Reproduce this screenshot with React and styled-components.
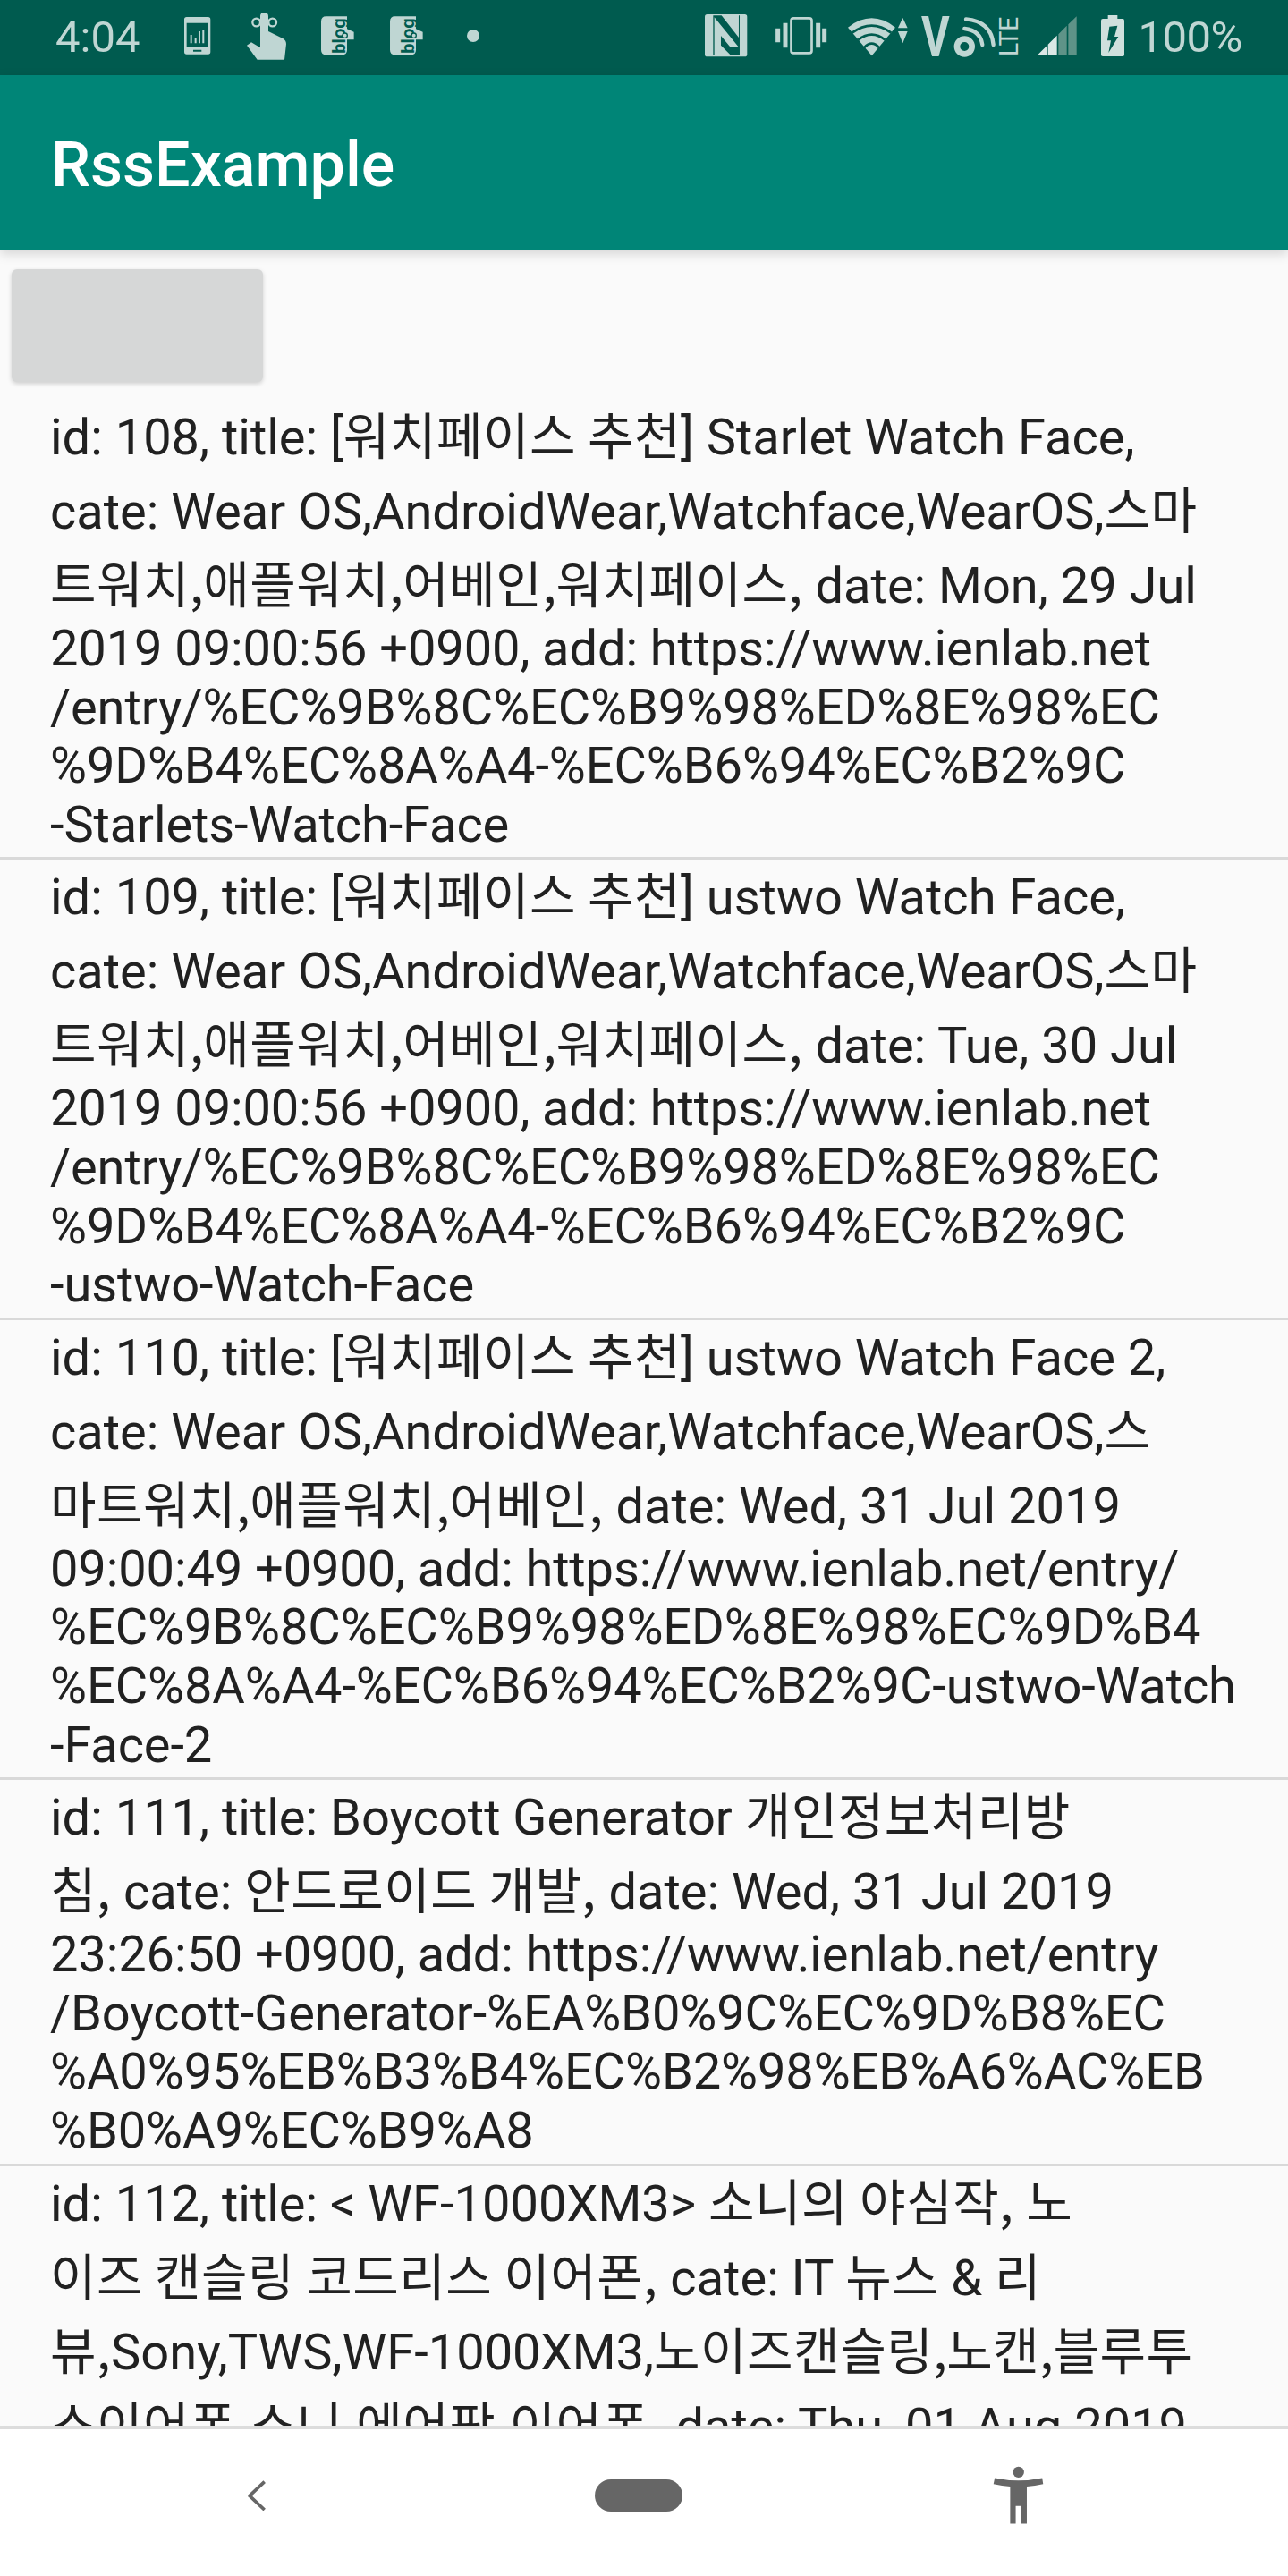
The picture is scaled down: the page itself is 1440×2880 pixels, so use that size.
import React from "react";
import styled, { createGlobalStyle } from "styled-components";

const Global = createGlobalStyle`
  html, body { margin: 0; padding: 0; background: #fafafa; }
  body { font-family: Roboto, "Noto Sans CJK KR", sans-serif; }
`;

const Screen = styled.div`
  width: 1440px;
  height: 2880px;
  display: flex;
  flex-direction: column;
  overflow: hidden;
  background: #fafafa;
`;

const StatusBar = styled.div`
  height: 84px;
  flex: none;
  display: flex;
  align-items: center;
  justify-content: space-between;
  padding: 0 51px 4px 62px;
  box-sizing: border-box;
  background: #005b4f;
  color: #bfd6d3;
  font-size: 49px;
`;

const StatusGroup = styled.div`
  display: flex;
  align-items: center;
`;

const StatusText = styled.span`
  margin-top: 3px;
  margin-left: ${(p) => p.$ml || 0}px;
  letter-spacing: ${(p) => p.$ls || 0}px;
`;

const Ic = styled.svg`
  display: block;
  flex: none;
  overflow: visible;
  fill: #bfd6d3;
  margin-left: ${(p) => p.$ml || 0}px;
`;

const AppBar = styled.header`
  height: 196px;
  flex: none;
  display: flex;
  align-items: center;
  padding: 4px 0 0 57px;
  box-sizing: border-box;
  background: #008577;
  color: #fff;
  font-size: 70px;
  font-weight: 500;
  box-shadow: 0 4px 12px rgba(0, 0, 0, 0.15);
  position: relative;
  z-index: 1;
`;

const Content = styled.main`
  flex: 1;
  min-height: 0;
  overflow: hidden;
`;

const LoadButton = styled.div`
  width: 281px;
  height: 126px;
  margin: 21px 0 20px 13px;
  border-radius: 6px;
  background: #d6d7d7;
  box-shadow: 0 2px 5px rgba(0, 0, 0, 0.18);
`;

const Row = styled.article`
  padding-left: 56px;
  border-bottom: ${(p) => (p.$last ? "none" : "3px solid #d9d9d9")};
  color: #212121;
  font-size: 56px;
`;

const Line = styled.div`
  white-space: nowrap;
  height: ${(p) => (p.$tall ? 83 : 65.6)}px;
  line-height: ${(p) => (p.$tall ? 84 : 59)}px;
  letter-spacing: ${(p) => (p.$tall ? 0 : -0.1)}px;
`;

const Hangul = styled.span`
  font-family: "Noto Sans CJK KR", sans-serif;
  line-height: 0;
  letter-spacing: 0.5px;
`;

const TightComma = styled.span`
  letter-spacing: -0.5px;
`;

const NavBar = styled.nav`
  height: 168px;
  flex: none;
  display: flex;
  align-items: center;
  padding: 0 0 16px 277px;
  border-top: 4px solid #dcdcdc;
  box-sizing: border-box;
  background: #fff;
`;

const NavIcon = styled.svg`
  display: block;
  flex: none;
  fill: #666;
  margin-left: ${(p) => p.$ml || 0}px;
`;

const rows = [
  [
    ["id: 108, title: [워치페이스 추천] Starlet Watch Face,", 1],
    ["cate: Wear OS,AndroidWear,Watchface,WearOS,스마", 1],
    ["트워치,애플워치,어베인,워치페이스, date: Mon, 29 Jul", 1],
    ["2019 09:00:56 +0900, add: https://www.ienlab.net", 0],
    ["/entry/%EC%9B%8C%EC%B9%98%ED%8E%98%EC", 0],
    ["%9D%B4%EC%8A%A4-%EC%B6%94%EC%B2%9C", 0],
    ["-Starlets-Watch-Face", 0],
  ],
  [
    ["id: 109, title: [워치페이스 추천] ustwo Watch Face,", 1],
    ["cate: Wear OS,AndroidWear,Watchface,WearOS,스마", 1],
    ["트워치,애플워치,어베인,워치페이스, date: Tue, 30 Jul", 1],
    ["2019 09:00:56 +0900, add: https://www.ienlab.net", 0],
    ["/entry/%EC%9B%8C%EC%B9%98%ED%8E%98%EC", 0],
    ["%9D%B4%EC%8A%A4-%EC%B6%94%EC%B2%9C", 0],
    ["-ustwo-Watch-Face", 0],
  ],
  [
    ["id: 110, title: [워치페이스 추천] ustwo Watch Face 2,", 1],
    ["cate: Wear OS,AndroidWear,Watchface,WearOS,스", 1],
    ["마트워치,애플워치,어베인, date: Wed, 31 Jul 2019", 1],
    ["09:00:49 +0900, add: https://www.ienlab.net/entry/", 0],
    ["%EC%9B%8C%EC%B9%98%ED%8E%98%EC%9D%B4", 0],
    ["%EC%8A%A4-%EC%B6%94%EC%B2%9C-ustwo-Watch", 0],
    ["-Face-2", 0],
  ],
  [
    ["id: 111, title: Boycott Generator 개인정보처리방", 1],
    ["침, cate: 안드로이드 개발, date: Wed, 31 Jul 2019", 1],
    ["23:26:50 +0900, add: https://www.ienlab.net/entry", 0],
    ["/Boycott-Generator-%EA%B0%9C%EC%9D%B8%EC", 0],
    ["%A0%95%EB%B3%B4%EC%B2%98%EB%A6%AC%EB", 0],
    ["%B0%A9%EC%B9%A8", 0],
  ],
  [
    ["id: 112, title: < WF-1000XM3> 소니의 야심작, 노", 1],
    ["이즈 캔슬링 코드리스 이어폰, cate: IT 뉴스 & 리", 1],
    ["뷰,Sony,TWS,WF-1000XM3,노이즈캔슬링,노캔,블루투", 1],
    ["스이어폰,소니,에어팟,이어폰, date: Thu, 01 Aug 2019", 1],
  ],
];

const HANGUL_RUN = /([가-힣]+(?:[, ][가-힣]+)*,?)/g;
const INNER_COMMA = /(,(?=\S))/g;

function LineText({ text }) {
  const pieces = text.split(HANGUL_RUN);
  return pieces.map((part, i) => {
    if (i % 2 === 0) return part;
    // a comma that closes a run but has no space after it is also set tight
    const glued = part.endsWith(",") && pieces[i + 1] && !pieces[i + 1].startsWith(" ");
    const inner = part.split(INNER_COMMA);
    return (
      <Hangul key={i}>
        {inner.map((p, k) =>
          k % 2 || (glued && p === "," ) ? <TightComma key={k}>{p}</TightComma> : p
        )}
      </Hangul>
    );
  });
}

const DARK = "#005b4f";

function BlogIcon({ ml }) {
  return (
    <Ic $ml={ml} width="36.67" height="43.3" viewBox="478 25 110 130">
      <path d="M495 26H565V68L588 78V104H565V138Q565 155 548 155H495Q478 155 478 138V43Q478 26 495 26Z" />
      <text
        transform="translate(558 150) rotate(-90)"
        fill={DARK}
        fontFamily="Roboto, sans-serif"
        fontWeight="700"
        fontSize="60"
      >
        blog
      </text>
      <circle cx="558" cy="90" r="8" fill="#bfd6d3" stroke={DARK} strokeWidth="4" />
    </Ic>
  );
}

export default function App() {
  return (
    <Screen>
      <Global />
      <StatusBar>
        <StatusGroup>
          <StatusText>4:04</StatusText>
          <Ic $ml={50} width="29.3" height="41.7" viewBox="20 28 88 125">
            <path
              fillRule="evenodd"
              d="M28 28H100Q108 28 108 36V145Q108 153 100 153H28Q20 153 20 145V36Q20 28 28 28ZM28 48V128H100V48ZM50 138V144H78V138Z"
            />
            <path d="M40 88H46V116H40ZM55 98H61V116H55ZM68 76H74V116H68ZM81 70H87V116H81Z" />
          </Ic>
          <Ic $ml={40} width="44" height="52.7" viewBox="230 12 132 158">
            <path d="M275 24Q275 12 288 12Q302 12 302 24V75L352 100Q362 106 362 118L356 170H265L230 122L245 112L275 130Z" />
            <circle cx="262" cy="45" r="13" fill="none" stroke="#bfd6d3" strokeWidth="7" />
            <circle cx="316" cy="45" r="13" fill="none" stroke="#bfd6d3" strokeWidth="7" />
          </Ic>
          <BlogIcon ml={39} />
          <BlogIcon ml={41} />
          <Ic $ml={49} width="14" height="14" viewBox="0 0 14 14">
            <circle cx="7" cy="7" r="7" />
          </Ic>
        </StatusGroup>
        <StatusGroup>
          <Ic width="47.3" height="47.3" viewBox="18 18 142 142">
            <rect x="18" y="18" width="142" height="142" rx="8" />
            <path
              fill={DARK}
              d="M46 22H74L132 96V22H135V155H105L72 122V90L102 126L130 126L50 28V155H46Z"
            />
          </Ic>
          <Ic $ml={32} width="57" height="41.7" viewBox="255 25 170 125">
            <rect x="307" y="29" width="69" height="117" rx="8" fill="none" stroke="#bfd6d3" strokeWidth="8" />
            <path d="M255 63H270V110H255ZM280 45H295V128H280ZM390 45H405V128H390ZM411 63H426V110H411Z" />
          </Ic>
          <Ic $ml={24} width="67.3" height="44.7" viewBox="498 22 202 134">
            <path d="M498 60Q578 -2 657 60L578 155Z" />
            <path
              d="M512 78Q578 30 643 78M532 102Q578 66 623 102M552 128Q578 100 603 128"
              fill="none"
              stroke={DARK}
              strokeWidth="8"
            />
            <path d="M682 28L698 62H666ZM666 73H698L682 113Z" />
          </Ic>
          <Ic $ml={14} width="108.3" height="45" viewBox="20 20 325 135">
            <text
              x="20"
              y="155"
              fontFamily="Roboto, sans-serif"
              fontWeight="700"
              fontSize="187"
              textLength="95"
              lengthAdjust="spacingAndGlyphs"
            >
              V
            </text>
            <circle cx="165" cy="122" r="25" fill="none" stroke="#bfd6d3" strokeWidth="20" />
            <path
              d="M170 30Q255 38 262 116M165 62Q218 68 225 116"
              fill="none"
              stroke="#bfd6d3"
              strokeWidth="13"
              strokeLinecap="round"
            />
            <text
              transform="translate(345 155) rotate(-90)"
              fontFamily="Roboto, sans-serif"
              fontSize="87"
              textLength="133"
              lengthAdjust="spacingAndGlyphs"
            >
              LTE
            </text>
          </Ic>
          <Ic $ml={22} width="43.7" height="43.7" viewBox="412 25 131 130">
            <path fill="#dce8e6" d="M412 155L442 125V155ZM447 120L477 90V155H447Z" />
            <path fill="#5f9388" d="M482 85L510 57V155H482ZM515 52L543 25V155H515Z" />
          </Ic>
          <Ic $ml={28} width="26" height="46" viewBox="627 20 78 138">
            <path
              fill="#cfe0dd"
              fillRule="evenodd"
              d="M650 20H682V32H699Q705 32 705 38V152Q705 158 699 158H633Q627 158 627 152V38Q627 32 633 32H650ZM655 58L648 105H660L652 146L685 92H672L682 55Z"
            />
          </Ic>
          <StatusText $ml={15} $ls={-0.5}>100%</StatusText>
        </StatusGroup>
      </StatusBar>
      <AppBar>RssExample</AppBar>
      <Content>
        <LoadButton />
        {rows.map((r, i) => (
          <Row key={i} $last={i === rows.length - 1}>
            {r.map(([t, tall], j) => (
              <Line key={j} $tall={tall}>
                <LineText text={t} />
              </Line>
            ))}
          </Row>
        ))}
      </Content>
      <NavBar>
        <NavIcon width="20.7" height="34.7" viewBox="172 158 62 104">
          <path d="M228 163L178 210L228 257" fill="none" stroke="#666" strokeWidth="11" />
        </NavIcon>
        <NavIcon $ml={367} width="98" height="36" viewBox="0 0 98 36">
          <rect width="98" height="36" rx="18" />
        </NavIcon>
        <NavIcon $ml={347} width="57" height="65.5" viewBox="1360 115 165 190">
          <circle cx="1443" cy="135" r="18" />
          <path d="M1366 154Q1443 170 1520 154L1523 174Q1496 180 1470 182V302H1452V245H1434V302H1416V182Q1390 180 1362 174Z" />
        </NavIcon>
      </NavBar>
    </Screen>
  );
}
